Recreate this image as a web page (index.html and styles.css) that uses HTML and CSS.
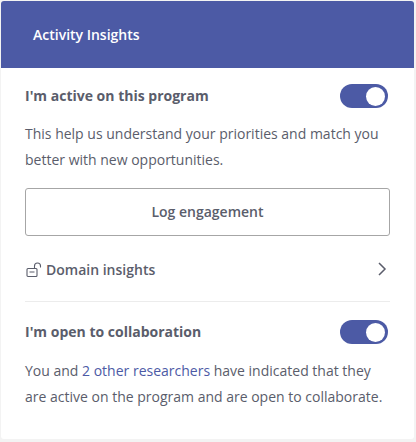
FILE: index.html
```html
<!DOCTYPE html>
<html lang="en">
<head>
<meta charset="utf-8">
<title>Activity Insights</title>
<link rel="stylesheet" href="styles.css">
</head>
<body>
<section class="card">
  <header class="card-header">Activity Insights</header>
  <div class="card-body">
    <div class="row row-first">
      <h3 class="row-title">I'm active on this program</h3>
      <span class="toggle"><span class="knob"></span></span>
    </div>
    <p class="text text-first">This help us understand your priorities and match you better with new opportunities.</p>
    <button class="btn" type="button">Log engagement</button>
    <div class="domain">
      <span class="domain-label">
        <svg class="lock" width="17" height="16" viewBox="0 0 17 16" fill="none" stroke="#5a5d6b" stroke-width="1.1">
          <rect x="1" y="6.5" width="10" height="8" rx="1"/>
          <path d="M3.5 10h5"/>
          <path d="M8.5 6.5V4a3 3 0 0 1 6 0V5.5"/>
        </svg>
        Domain insights
      </span>
      <svg class="chev" width="10" height="14" viewBox="0 0 10 14" fill="none" stroke="#5a5d6b" stroke-width="1.5">
        <path d="M2 1l6 6-6 6"/>
      </svg>
    </div>
    <hr class="divider">
    <div class="row">
      <h3 class="row-title">I'm open to collaboration</h3>
      <span class="toggle"><span class="knob"></span></span>
    </div>
    <p class="text text-last">You and <a class="link" href="#">2 other researchers</a> have indicated that they are active on the program and are open to collaborate.</p>
  </div>
</section>
</body>
</html>
```
FILE: styles.css
```css
* { box-sizing: border-box; }
html, body { margin: 0; padding: 0; }
body {
  width: 416px;
  height: 442px;
  background: #f3f3f3;
  padding: 1px 2px 3px 1px;
  font-family: "Open Sans", sans-serif;
  font-size: 14px;
  color: #5a5d6b;
  overflow: hidden;
}
.card {
  background: #fff;
  height: 438px;
  border-radius: 3px;
  overflow: hidden;
}
.card-header {
  background: #4c5aa5;
  color: #fff;
  font-weight: 600;
  font-size: 14px;
  height: 67px;
  line-height: 67px;
  padding-left: 32px;
}
.card-body { padding: 0 24px 0 24px; }
.row {
  display: flex;
  justify-content: space-between;
  align-items: center;
  height: 24px;
}
.row-first { margin-top: 16px; }
.row-title {
  margin: -1px 0 0;
  font-size: 14px;
  font-weight: 700;
  color: #5a5d6b;
}
.toggle {
  width: 48px;
  height: 24px;
  border-radius: 12px;
  background: #4c5aa5;
  display: flex;
  justify-content: flex-end;
  align-items: center;
  padding-right: 3px;
  margin-right: 2px;
}
.knob {
  width: 19px;
  height: 19px;
  border-radius: 50%;
  background: #fff;
}
.text {
  margin: 0;
  line-height: 26px;
}
.text-first { margin-top: 13px; }
.text-last { margin-top: 14px; }
.btn {
  display: block;
  width: 365px;
  height: 48px;
  margin-top: 15px;
  padding: 0 0 2px;
  background: #fff;
  border: 1px solid #a6a6a6;
  border-radius: 3px;
  font-family: inherit;
  font-size: 14px;
  font-weight: 600;
  color: #5a5d6b;
}
.domain {
  display: flex;
  justify-content: space-between;
  align-items: center;
  height: 24px;
  margin-top: 21px;
  padding-right: 3px;
}
.domain-label {
  display: flex;
  align-items: center;
  gap: 3px;
  font-weight: 600;
  margin-left: 1px;
}
.lock { margin-top: 1px; }
.divider {
  border: 0;
  border-top: 1px solid #ececec;
  margin: 20px 0 18px;
}
.link { color: #4c5aa5; text-decoration: none; }
```
